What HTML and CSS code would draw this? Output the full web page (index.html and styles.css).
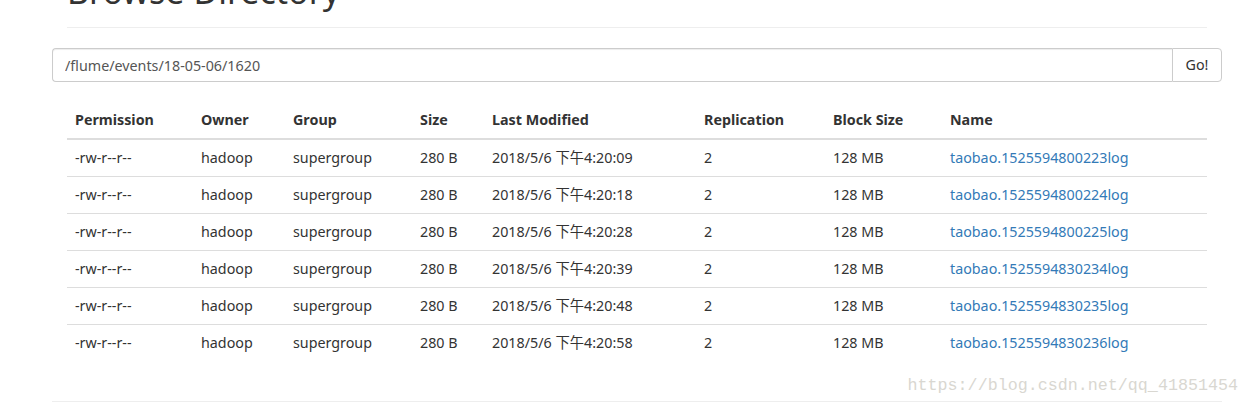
FILE: index.html
```html
<!DOCTYPE html>
<html lang="zh-CN">
<head>
    <meta charset="UTF-8">
    <title>Browse Directory</title>
    <link rel="stylesheet" href="styles.css">
</head>
<body>
    <div class="container">
        <div class="page-header">
            <h1>Browse Directory</h1>
        </div>

        <form class="path-form" onsubmit="return false;">
            <div class="input-group">
                <input type="text" class="form-control" value="/flume/events/18-05-06/1620">
                <button type="submit" class="btn">Go!</button>
            </div>
        </form>

        <div class="table-wrap">
            <table class="table">
                <thead>
                    <tr>
                        <th class="col-perm">Permission</th>
                        <th class="col-owner">Owner</th>
                        <th class="col-group">Group</th>
                        <th class="col-size">Size</th>
                        <th class="col-mod">Last Modified</th>
                        <th class="col-rep">Replication</th>
                        <th class="col-block">Block Size</th>
                        <th>Name</th>
                    </tr>
                </thead>
                <tbody id="file-list"></tbody>
            </table>
        </div>

        <hr class="footer-rule">
        <div class="watermark">https://blog.csdn.net/qq_41851454</div>
    </div>

    <script>
        // 目录文件列表
        const files = [
            { time: '4:20:09', name: 'taobao.1525594800223log' },
            { time: '4:20:18', name: 'taobao.1525594800224log' },
            { time: '4:20:28', name: 'taobao.1525594800225log' },
            { time: '4:20:39', name: 'taobao.1525594830234log' },
            { time: '4:20:48', name: 'taobao.1525594830235log' },
            { time: '4:20:58', name: 'taobao.1525594830236log' }
        ];

        const tbody = document.getElementById('file-list');
        files.forEach(function(f) {
            const tr = document.createElement('tr');
            tr.innerHTML = `
                <td>-rw-r--r--</td>
                <td>hadoop</td>
                <td>supergroup</td>
                <td>280 B</td>
                <td>2018/5/6 下午${f.time}</td>
                <td>2</td>
                <td>128 MB</td>
                <td><a href="#">${f.name}</a></td>
            `;
            tbody.appendChild(tr);
        });
    </script>
</body>
</html>
```

FILE: styles.css
```css
* {
    margin: 0;
    padding: 0;
    box-sizing: border-box;
}

body {
    font-family: 'Noto Sans', 'Noto Sans CJK SC', sans-serif;
    font-size: 14.3px;
    line-height: 20px;
    color: #333;
    background: #fff;
    overflow: hidden;
}

.container {
    width: 1170px;
    margin-left: 52px;
    position: relative;
}

.page-header {
    margin: -29px 15px 20px;
    padding-bottom: 16px;
    border-bottom: 1px solid #eee;
}

.page-header h1 {
    font-size: 34px;
    line-height: 40px;
    font-weight: 400;
}

.input-group {
    display: flex;
    height: 34px;
}

.form-control {
    flex: 1;
    height: 34px;
    padding: 6px 12px;
    font: inherit;
    color: #555;
    border: 1px solid #ccc;
    border-right: none;
    border-radius: 4px 0 0 4px;
    box-shadow: inset 0 1px 1px rgba(0, 0, 0, 0.075);
    outline: none;
}

.btn {
    width: 50px;
    height: 34px;
    font: inherit;
    color: #333;
    background: #fff;
    border: 1px solid #ccc;
    border-radius: 0 4px 4px 0;
    cursor: pointer;
}

.table-wrap {
    margin: 20px 15px 0;
}

.table {
    width: 100%;
    border-collapse: collapse;
}

.table th,
.table td {
    text-align: left;
    padding: 8px;
    white-space: nowrap;
}

.table th {
    font-weight: bold;
    border-bottom: 2px solid #ddd;
}

.table td {
    border-top: 1px solid #ddd;
}

.table tbody tr:first-child td {
    border-top: none;
}

.col-perm { width: 126px; }
.col-owner { width: 92px; }
.col-group { width: 127px; }
.col-size { width: 72px; }
.col-mod { width: 212px; }
.col-rep { width: 129px; }
.col-block { width: 117px; }

.table a {
    color: #337ab7;
    text-decoration: none;
}

.footer-rule {
    margin-top: 40px;
    border: none;
    border-top: 1px solid #eee;
}

.watermark {
    position: absolute;
    right: -16px;
    bottom: 6px;
    font-family: 'Liberation Mono', monospace;
    font-size: 16.7px;
    color: #d9d7d1;
}
```
